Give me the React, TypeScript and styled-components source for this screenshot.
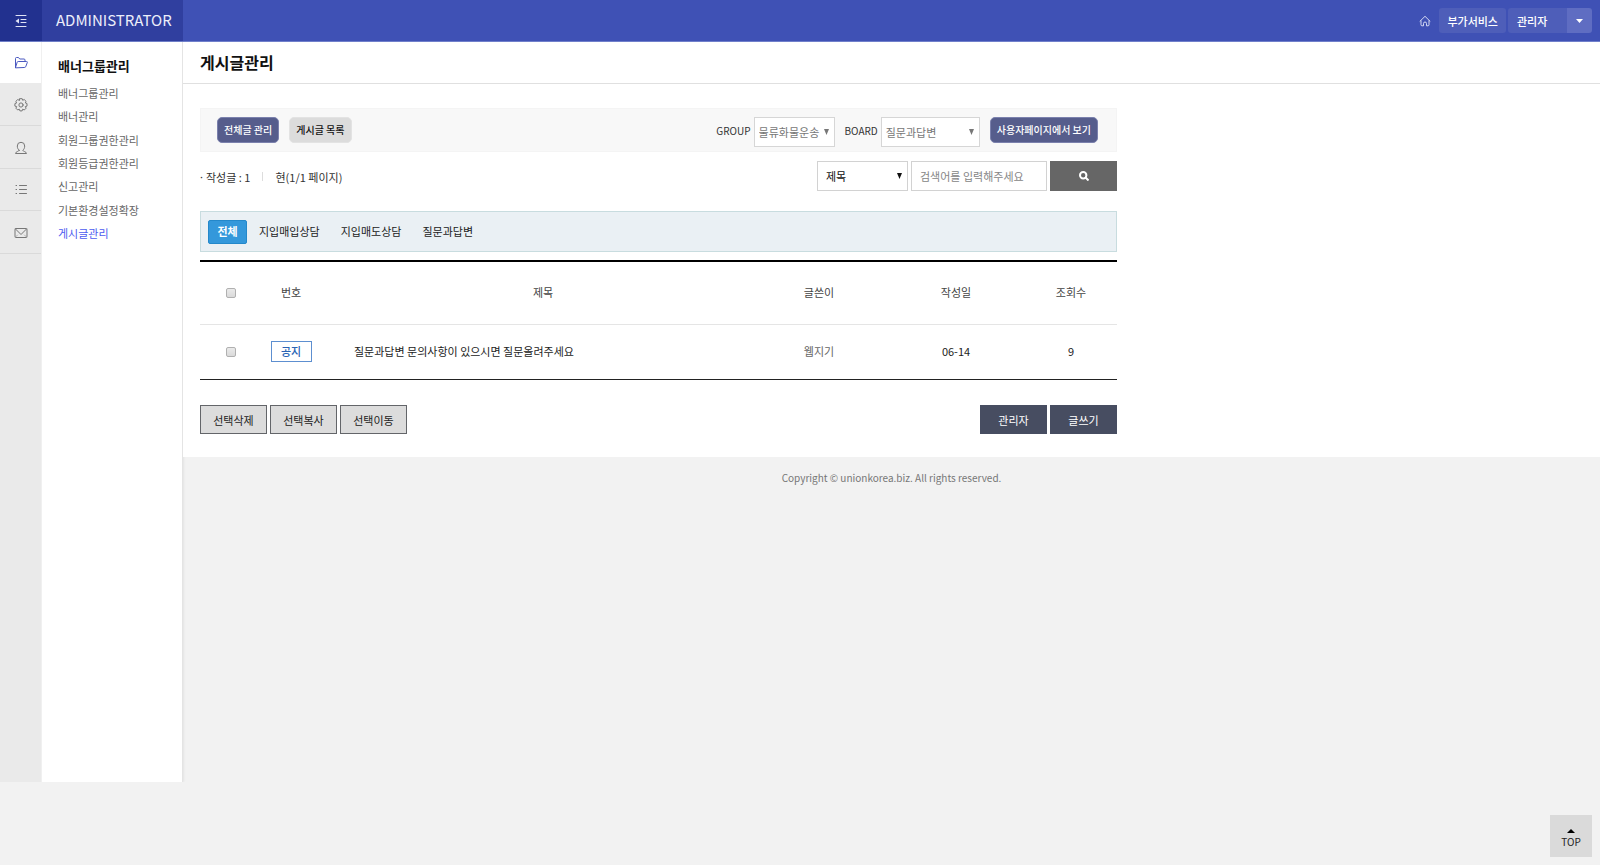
import React from "react";
import styled, { createGlobalStyle, css } from "styled-components";

const GlobalStyle = createGlobalStyle`
  *, *::before, *::after { box-sizing: border-box; }
  body {
    margin: 0;
    background: #f2f2f2;
    color: #333;
    font: 11px/16px "Noto Sans CJK KR", "Noto Sans", sans-serif;
  }
  button, input, select { font: inherit; color: inherit; margin: 0; border-radius: 0; }
  button { padding: 0; cursor: pointer; }
  a { color: inherit; text-decoration: none; }
  ul, h1, h2, p { margin: 0; padding: 0; list-style: none; }
`;

const Header = styled.header`
  display: flex;
  height: 42px;
  background: #3f51b5;
  border-bottom: 1px solid #7080cb;
`;
const MenuToggle = styled.button`
  display: flex;
  align-items: center;
  justify-content: center;
  width: 42px;
  border: 0;
  background: #22318f;
  color: #dfe3f5;
`;
const Brand = styled.a`
  width: 141px;
  padding-left: 14px;
  background: #303f9f;
  color: #eceefa;
  font-size: 15px;
  line-height: 40px;
`;
const HeaderTools = styled.nav`
  display: flex;
  align-items: center;
  gap: 2px;
  margin-left: auto;
  padding-right: 8px;
  color: #fff;
`;
const HomeLink = styled.a`
  display: flex;
  padding: 5px 6px 4px;
  color: #d5daf2;
`;
const headerButton = css`
  height: 25px;
  border: 0;
  background: #4e5eb9;
  color: #fff;
  font-weight: 500;
  line-height: 24px;
`;
const HeaderButton = styled.button`
  ${headerButton}
  padding: 0 8px;
  border-radius: 3px;
`;
const AccountGroup = styled.div`
  display: flex;
`;
const AccountButton = styled.button`
  ${headerButton}
  width: 59px;
  padding-left: 9px;
  text-align: left;
  border-radius: 3px 0 0 3px;
`;
const AccountToggle = styled.button`
  ${headerButton}
  display: flex;
  align-items: center;
  justify-content: center;
  width: 25px;
  background: #5f6dc2;
  border-radius: 0 3px 3px 0;
`;

const Body = styled.div`
  display: flex;
  align-items: flex-start;
`;
const Aside = styled.aside`
  display: flex;
  flex: none;
  width: 183px;
  min-height: calc(100vh - 125px);
  background: #fff;
  border-right: 1px solid #e4e4e4;
  box-shadow: 1px 0 2px rgba(0, 0, 0, 0.06);
`;
const Rail = styled.nav`
  width: 42px;
  background: #eaeaea;
  border-right: 1px solid #f0f0f0;
`;
const RailList = styled.ul`
  display: grid;
  grid-template-rows: 41px repeat(4, 1fr);
  height: 212px;
`;
const RailLink = styled.a<{ $active?: boolean }>`
  display: flex;
  align-items: center;
  justify-content: center;
  height: 100%;
  padding-top: 2px;
  color: ${(p) => (p.$active ? "#4a58c0" : "#777")};
  background: ${(p) => (p.$active ? "#fff" : "transparent")};
  border-bottom: 1px solid ${(p) => (p.$active ? "#fff" : "#dadada")};
`;
const SubNav = styled.nav`
  padding: 16px;
`;
const SubTitle = styled.h2`
  color: #111;
  font-size: 13px;
  font-weight: 700;
  line-height: 16px;
`;
const SubList = styled.ul`
  display: flex;
  flex-direction: column;
  justify-content: space-between;
  height: 156px;
  margin-top: 11px;
`;
const SubLink = styled.a<{ $active?: boolean }>`
  display: block;
  color: ${(p) => (p.$active ? "#4d5cf0" : "#666")};
`;

const Page = styled.div`
  flex: 1;
  min-width: 0;
`;
const Main = styled.main`
  background: #fff;
`;
const PageTitle = styled.h1`
  height: 42px;
  padding-left: 17px;
  border-bottom: 1px solid #e0e0e0;
  color: #111;
  font-size: 16px;
  font-weight: 700;
  line-height: 40px;
`;
const Content = styled.div`
  max-width: 951px;
  padding: 24px 17px 23px;
`;

const FilterBar = styled.div`
  display: flex;
  justify-content: space-between;
  height: 44px;
  padding: 8px 18px 0 16px;
  background: #f8f8f8;
  border: 1px solid #f4f4f4;
`;
const FilterGroup = styled.div`
  display: flex;
  align-items: flex-start;
  gap: 10px;
`;
const PillButton = styled.button<{ $light?: boolean }>`
  height: 26px;
  padding: 0 6px;
  border: 1px solid ${(p) => (p.$light ? "#e3e3e3" : "#7b81ad")};
  border-radius: 5px;
  background: ${(p) => (p.$light ? "#dcdcdc" : "#565d8c")};
  color: ${(p) => (p.$light ? "#111" : "#fff")};
  font-size: 10px;
  font-weight: 500;
  line-height: 24px;
`;
const Field = styled.label`
  display: flex;
  gap: 3px;
  font-size: 10px;
  line-height: 27px;
`;
const SelectBox = styled.span<{ $width: number; $dark?: boolean }>`
  display: grid;
  grid-template-columns: 1fr 10px;
  align-items: center;
  width: ${(p) => p.$width}px;
  height: 30px;
  border: 1px solid ${(p) => (p.$dark ? "#d2d2d2" : "#d6d6d6")};
  background: #fff;
  color: ${(p) => (p.$dark ? "#111" : "#777")};
  select {
    grid-area: 1 / 1 / 2 / 3;
    width: 100%;
    height: 28px;
    padding: 0 0 0 ${(p) => (p.$dark ? 8 : 4)}px;
    appearance: none;
    border: 0;
    background: transparent;
    opacity: 1;
    color: inherit;
    font-size: 11px;
  }
  svg {
    grid-area: 1 / 2;
    pointer-events: none;
  }
`;

const SearchRow = styled.div`
  display: flex;
  align-items: center;
  justify-content: space-between;
  height: 30px;
  margin-top: 9px;
`;
const Stats = styled.p`
  display: flex;
  align-items: center;
  padding-top: 1px;
`;
const StatDot = styled.span`
  width: 6px;
  font-family: "Noto Sans", sans-serif;
`;
const StatDivider = styled.span`
  width: 1px;
  height: 9px;
  margin: 0 12px;
  background: #ddd;
`;
const SearchForm = styled.form`
  display: flex;
  gap: 3px;
`;
const SearchInput = styled.input`
  width: 136px;
  height: 30px;
  padding: 0 8px;
  border: 1px solid #d2d2d2;
  background: #fff;
  &::placeholder { color: #858585; opacity: 1; }
`;
const SearchButton = styled.button`
  display: flex;
  align-items: center;
  justify-content: center;
  width: 67px;
  height: 30px;
  border: 0;
  background: #666;
  color: #fff;
`;

const CategoryBar = styled.nav`
  display: flex;
  align-items: center;
  gap: 21px;
  height: 41px;
  margin-top: 20px;
  padding: 0 7px;
  border: 1px solid #c8dcdf;
  background: #eaf0f4;
  color: #222;
`;
const Category = styled.a<{ $active?: boolean }>`
  line-height: 18px;
  padding-bottom: 2px;
  ${(p) =>
    p.$active &&
    css`
      width: 39px;
      height: 24px;
      margin-right: -9px;
      padding: 0;
      border: 1px solid #2488ca;
      border-radius: 2px;
      background: #3498db;
      color: #fff;
      font-weight: 700;
      line-height: 21px;
      text-align: center;
    `}
`;

const Table = styled.table`
  width: 100%;
  margin-top: 8px;
  border-collapse: separate;
  border-spacing: 0;
  border-top: 2px solid #000;
  border-bottom: 1px solid #222;
  table-layout: fixed;
  text-align: center;
  th { height: 63px; padding: 0 0 2px; border-bottom: 1px solid #e5e5e5; font-weight: 400; color: #444; }
  td { height: 54px; padding: 0 0 2px; color: #222; }
  th:first-child, td:first-child { padding-left: 15px; }
`;
const Col = styled.col<{ $width?: number }>`
  width: ${(p) => (p.$width ? `${p.$width}px` : "auto")};
`;
const SubjectCell = styled.td`
  && { padding-left: 19px; text-align: left; }
`;
const WriterCell = styled.td`
  && { color: #666; }
`;
const Check = styled.input`
  display: block;
  appearance: none;
  width: 10px;
  height: 10px;
  margin: 2px auto 0 !important;
  border: 1px solid #b0b0b0;
  border-radius: 2px !important;
  background: linear-gradient(#eaeaea, #dadada);
  &:checked { background: #3498db; }
`;
const NoticeBadge = styled.span`
  display: block;
  width: 41px;
  height: 21px;
  margin: 0 auto;
  border: 1px solid #5d8fd0;
  background: #fff;
  color: #2a64b4;
  font-weight: 500;
  line-height: 18px;
`;
const Actions = styled.div`
  display: flex;
  justify-content: space-between;
  margin-top: 25px;
`;
const ActionGroup = styled.div`
  display: flex;
  gap: 3px;
`;
const ActionButton = styled.button<{ $dark?: boolean }>`
  width: 67px;
  height: 29px;
  border: 1px solid ${(p) => (p.$dark ? "#474d61" : "#636569")};
  background: ${(p) => (p.$dark ? "#474d61" : "#dcdcdc")};
  color: ${(p) => (p.$dark ? "#fff" : "#222")};
  line-height: 26px;
`;
const Footer = styled.footer`
  padding-top: 13px;
  color: #777;
  font-size: 10px;
  text-align: center;
`;
const TopLink = styled.a`
  position: fixed;
  right: 8px;
  bottom: 8px;
  display: flex;
  flex-direction: column;
  align-items: center;
  width: 42px;
  height: 42px;
  padding-top: 14px;
  background: #dadada;
  color: #222;
  font-size: 10px;
  line-height: 18px;
`;

const Icon = ({ size = 14, children }: { size?: number; children: React.ReactNode }) => (
  <svg width={size} height={size} viewBox={`0 0 ${size} ${size}`} fill="none" stroke="currentColor" strokeWidth="1" strokeLinecap="round" strokeLinejoin="round" aria-hidden="true">
    {children}
  </svg>
);

const railItems = [
  {
    label: "콘텐츠",
    icon: <path d="M1.500 11.500v-9a1 1 0 0 1 1-1h2l1.200 1.500H10a1 1 0 0 1 1 1v1.500M1.500 11.500 3.200 6.200a1 1 0 0 1 1-.7h8.300a.8.8 0 0 1 .8 1l-1.600 4.300a1.200 1.200 0 0 1-1.100.7z" />,
  },
  {
    label: "환경설정",
    icon: (
      <>
        <circle cx="7" cy="7" r="2.1" />
        <path d="M5.800.7h2.400l.5 1.600 1.500-.8 1.900 1.900-.8 1.500 1.700.6v2.600l-1.700.5.8 1.600-1.800 1.800-1.600-.8-.6 1.700H5.900l-.6-1.700-1.600.8-1.800-1.800.8-1.600L.9 8.100V5.600l1.700-.6-.8-1.600 1.900-1.800 1.500.7z" />
      </>
    ),
  },
  {
    label: "회원",
    icon: <path d="M5.200 9.300C4 8.500 3.300 6.900 3.300 5a3.700 3.700 0 0 1 7.400 0c0 1.900-.7 3.500-1.900 4.300 0 1.300 3.500 1 3.700 3.200h-11c.2-2.200 3.700-1.900 3.700-3.200z" />,
  },
  {
    label: "목록",
    icon: <path d="M2 2.500h.6M2 6.500h.6M2 10.500h.6M5.500 2.500h7M5.500 6.500h7M5.500 10.500h7" />,
  },
  {
    label: "메일",
    icon: (
      <>
        <rect x="1" y="2.500" width="12" height="9" rx="1" />
        <path d="m1.500 3 5.500 5.500L12.500 3" />
        <path d="m1.500 11 2-2M12.500 11l-2-2" strokeOpacity="0.500" />
      </>
    ),
  },
];

const subItems = ["배너그룹관리", "배너관리", "회원그룹권한관리", "회원등급권한관리", "신고관리", "기본환경설정확장", "게시글관리"];
const categories = ["전체", "지입매입상담", "지입매도상담", "질문과답변"];

const Arrow = () => (
  <svg width="5" height="6" viewBox="0 0 5 6" aria-hidden="true">
    <path d="M0 0h5L2.500 6z" fill="currentColor" />
  </svg>
);

type SelectProps = { id: string; width: number; options: string[]; dark?: boolean; label?: string };
const Select = ({ id, width, options, dark, label }: SelectProps) => (
  <SelectBox $width={width} $dark={dark}>
    <select id={id} aria-label={label}>
      {options.map((o) => (
        <option key={o}>{o}</option>
      ))}
    </select>
    <Arrow />
  </SelectBox>
);

export default function App() {
  return (
    <>
      <GlobalStyle />
      <Header>
        <MenuToggle aria-label="메뉴 접기">
          <Icon size={12}>
            <path d="M1 .5h10M6 4.500h5M6 7.500h5M1 11.500h10" />
            <path d="M4 3.500v5L.5 6z" fill="currentColor" stroke="none" />
          </Icon>
        </MenuToggle>
        <Brand href="#">ADMINISTRATOR</Brand>
        <HeaderTools>
          <HomeLink href="#" aria-label="홈">
            <Icon size={12}>
              <path d="M1 6.200 6 1.300l5 4.900M2 5.800v4a1 1 0 0 0 1 1h1.500V8.500a1.500 1.500 0 0 1 3 0v2.300H9a1 1 0 0 0 1-1v-4" />
            </Icon>
          </HomeLink>
          <HeaderButton>부가서비스</HeaderButton>
          <AccountGroup>
            <AccountButton>관리자</AccountButton>
            <AccountToggle aria-label="계정 메뉴">
              <svg width="7" height="4" viewBox="0 0 7 4" aria-hidden="true">
                <path d="M0 0h7L3.500 4z" fill="currentColor" />
              </svg>
            </AccountToggle>
          </AccountGroup>
        </HeaderTools>
      </Header>
      <Body>
        <Aside>
          <Rail>
            <RailList>
              {railItems.map((item, i) => (
                <li key={item.label}>
                  <RailLink href="#" aria-label={item.label} $active={i === 0}>
                    <Icon>{item.icon}</Icon>
                  </RailLink>
                </li>
              ))}
            </RailList>
          </Rail>
          <SubNav>
            <SubTitle>배너그룹관리</SubTitle>
            <SubList>
              {subItems.map((item) => (
                <li key={item}>
                  <SubLink href="#" $active={item === "게시글관리"}>{item}</SubLink>
                </li>
              ))}
            </SubList>
          </SubNav>
        </Aside>
        <Page>
          <Main>
            <PageTitle>게시글관리</PageTitle>
            <Content>
              <FilterBar>
                <FilterGroup>
                  <PillButton>전체글 관리</PillButton>
                  <PillButton $light>게시글 목록</PillButton>
                </FilterGroup>
                <FilterGroup>
                  <Field htmlFor="group">
                    GROUP
                    <Select id="group" width={81} options={["물류화물운송"]} />
                  </Field>
                  <Field htmlFor="board">
                    BOARD
                    <Select id="board" width={99} options={["질문과답변", "지입매입상담", "지입매도상담"]} />
                  </Field>
                  <PillButton>사용자페이지에서 보기</PillButton>
                </FilterGroup>
              </FilterBar>
              <SearchRow>
                <Stats>
                  <StatDot>·</StatDot>작성글 : 1<StatDivider />현(1/1 페이지)
                </Stats>
                <SearchForm>
                  <Select id="field" width={91} options={["제목", "내용", "글쓴이"]} dark label="검색 조건" />
                  <SearchInput type="text" placeholder="검색어를 입력해주세요" aria-label="검색어" />
                  <SearchButton type="button" aria-label="검색">
                    <svg width="10" height="10" viewBox="0 0 10 10" fill="none" stroke="currentColor" strokeWidth="2" aria-hidden="true">
                      <circle cx="4.200" cy="4.200" r="3.200" />
                      <path d="m6.500 6.500 3 3" />
                    </svg>
                  </SearchButton>
                </SearchForm>
              </SearchRow>
              <CategoryBar>
                {categories.map((c, i) => (
                  <Category key={c} href="#" $active={i === 0}>{c}</Category>
                ))}
              </CategoryBar>
              <Table>
                <colgroup>
                  <Col $width={47} />
                  <Col $width={88} />
                  <Col />
                  <Col $width={136} />
                  <Col $width={138} />
                  <Col $width={92} />
                </colgroup>
                <thead>
                  <tr>
                    <th><Check type="checkbox" aria-label="전체 선택" /></th>
                    <th>번호</th>
                    <th>제목</th>
                    <th>글쓴이</th>
                    <th>작성일</th>
                    <th>조회수</th>
                  </tr>
                </thead>
                <tbody>
                  <tr>
                    <td><Check type="checkbox" aria-label="게시글 선택" /></td>
                    <td><NoticeBadge>공지</NoticeBadge></td>
                    <SubjectCell><a href="#">질문과답변 문의사항이 있으시면 질문올려주세요</a></SubjectCell>
                    <WriterCell>웹지기</WriterCell>
                    <td>06-14</td>
                    <td>9</td>
                  </tr>
                </tbody>
              </Table>
              <Actions>
                <ActionGroup>
                  <ActionButton>선택삭제</ActionButton>
                  <ActionButton>선택복사</ActionButton>
                  <ActionButton>선택이동</ActionButton>
                </ActionGroup>
                <ActionGroup>
                  <ActionButton $dark>관리자</ActionButton>
                  <ActionButton $dark>글쓰기</ActionButton>
                </ActionGroup>
              </Actions>
            </Content>
          </Main>
          <Footer>Copyright © unionkorea.biz. All rights reserved.</Footer>
        </Page>
      </Body>
      <TopLink href="#">
        <svg width="8" height="4" viewBox="0 0 8 4" aria-hidden="true">
          <path d="M0 4h8L4 0z" fill="#000" />
        </svg>
        TOP
      </TopLink>
    </>
  );
}
